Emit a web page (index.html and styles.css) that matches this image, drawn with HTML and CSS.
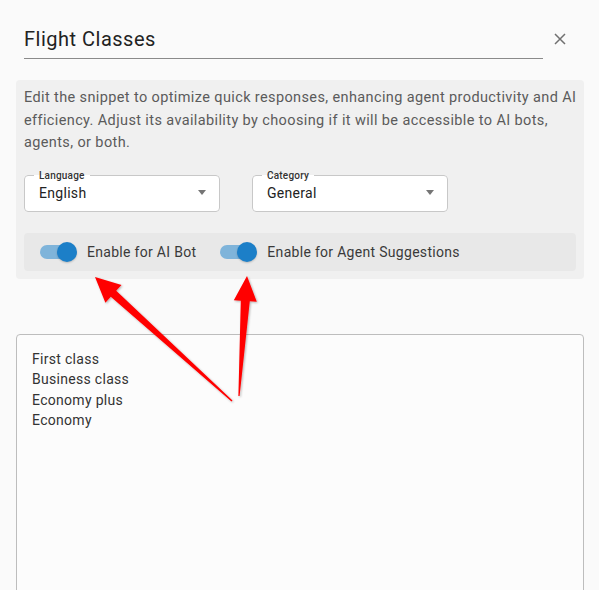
FILE: index.html
```html
<!DOCTYPE html>
<html>
<head>
<meta charset="utf-8">
<link rel="stylesheet" href="styles.css">
</head>
<body>
<div class="page">
  <div class="header">
    <div class="title">Flight Classes</div>
    <svg class="close" width="12" height="12" viewBox="0 0 12 12"><path d="M1 1L11 11M11 1L1 11" stroke="#707070" stroke-width="1.5" fill="none"/></svg>
  </div>
  <div class="panel">
    <p class="desc">Edit the snippet to optimize quick responses, enhancing agent productivity and AI<br>efficiency. Adjust its availability by choosing if it will be accessible to AI bots,<br>agents, or both.</p>
    <div class="selects">
      <fieldset class="select">
        <legend>Language</legend>
        <div class="value"><span>English</span><span class="caret"></span></div>
      </fieldset>
      <fieldset class="select">
        <legend>Category</legend>
        <div class="value"><span>General</span><span class="caret"></span></div>
      </fieldset>
    </div>
    <div class="toggles">
      <div class="toggle"><span class="switch"><span class="track"></span><span class="thumb"></span></span><span class="tlabel">Enable for AI Bot</span></div>
      <div class="toggle"><span class="switch"><span class="track"></span><span class="thumb"></span></span><span class="tlabel">Enable for Agent Suggestions</span></div>
    </div>
  </div>
  <div class="editor">
    <div>First class</div>
    <div>Business class</div>
    <div>Economy plus</div>
    <div>Economy</div>
  </div>
  <svg class="arrows" width="599" height="590" viewBox="0 0 599 590">
    <defs>
      <filter id="sh" x="-20%" y="-20%" width="140%" height="140%">
        <feDropShadow dx="1" dy="1" stdDeviation="1.2" flood-color="#000" flood-opacity="0.3"/>
      </filter>
    </defs>
    <polygon filter="url(#sh)" fill="#ff0000" points="95,277 121.5,285 116.2,290.8 232.5,400.5 231.5,401.5 110.8,296.8 105.4,302.7"/>
    <polygon filter="url(#sh)" fill="#ff0000" points="247,276 256.8,301.8 249.8,301.3 239.6,396 238.4,396 240.8,300.7 233.8,300.2"/>
  </svg>
</div>
</body>
</html>
```
FILE: styles.css
```css
html, body {
  margin: 0;
  padding: 0;
  background: #fafafa;
}
body {
  font-family: Roboto, "Liberation Sans", sans-serif;
  color: #333;
}
.page {
  position: relative;
  width: 599px;
  height: 590px;
  overflow: hidden;
}
.header {
  display: flex;
  align-items: center;
  gap: 11px;
  padding: 27px 33px 0 24px;
}
.title {
  flex: 1;
  font-size: 20px;
  line-height: 24px;
  letter-spacing: 0.5px;
  color: #222;
  padding-bottom: 7px;
  border-bottom: 1px solid #8a8a8a;
}
.close {
  display: block;
  margin-top: -8px;
}
.panel {
  margin: 21px 15px 0 16px;
  background: #f0f0f0;
  border-radius: 4px;
  padding: 7px 8px 8px 8px;
}
.desc {
  margin: 0;
  font-size: 14.5px;
  line-height: 22.5px;
  letter-spacing: 0.38px;
  color: #5b5b5b;
  white-space: nowrap;
}
.selects {
  display: flex;
  gap: 32px;
  margin-top: 16px;
}
.select {
  width: 196px;
  box-sizing: border-box;
  margin: 0;
  padding: 0 13px 0 9px;
  border: 1px solid #c8c8c8;
  border-radius: 4px;
  background: #fff;
  height: 41px;
  position: relative;
}
.select legend {
  font-size: 10px;
  line-height: 10px;
  padding: 0 5px;
  color: #333;
  font-weight: 500;
  letter-spacing: 0.2px;
}
.value {
  display: flex;
  align-items: center;
  justify-content: space-between;
  font-size: 14px;
  line-height: 24px;
  letter-spacing: 0.3px;
  padding-left: 5px;
  color: #222;
}
.caret {
  width: 0;
  height: 0;
  border-left: 4px solid transparent;
  border-right: 4px solid transparent;
  border-top: 5px solid #757575;
}
.toggles {
  margin-top: 21px;
  background: #e8e8e8;
  border-radius: 4px;
  height: 38px;
  display: flex;
  align-items: center;
  padding-left: 16px;
  gap: 24px;
}
.toggle {
  display: flex;
  align-items: center;
  gap: 10px;
}
.switch {
  position: relative;
  width: 37px;
  height: 20px;
  display: block;
}
.track {
  position: absolute;
  left: 0;
  top: 3px;
  width: 34px;
  height: 14px;
  border-radius: 7px;
  background: #7fb4da;
}
.thumb {
  position: absolute;
  right: 0;
  top: 0;
  width: 20px;
  height: 20px;
  border-radius: 50%;
  background: #1c7fc8;
  box-shadow: 0 1px 2px rgba(0,0,0,0.2);
}
.tlabel {
  font-size: 14px;
  letter-spacing: 0.3px;
  color: #3a3a3a;
}
.editor {
  margin: 55px 15px 0 16px;
  height: 300px;
  border: 1px solid #bdbdbd;
  border-radius: 4px;
  background: #fcfcfc;
  padding: 14px 15px;
  font-size: 14px;
  line-height: 20.5px;
  letter-spacing: 0.3px;
  color: #333;
}
.arrows {
  position: absolute;
  left: 0;
  top: 0;
  pointer-events: none;
}
```
